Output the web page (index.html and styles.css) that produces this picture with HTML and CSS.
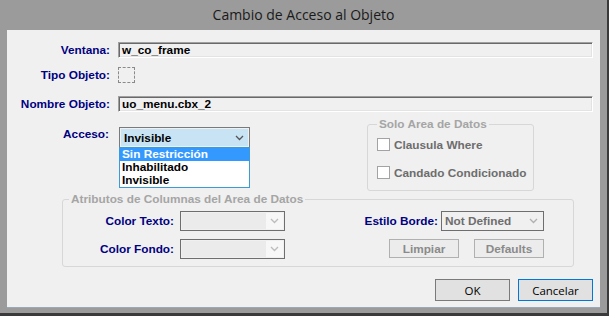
FILE: index.html
```html
<!DOCTYPE html>
<html lang="es">
<head>
  <meta charset="UTF-8">
  <title>Cambio de Acceso al Objeto</title>
  <link rel="stylesheet" href="styles.css">
</head>
<body>
  <div class="window">
    <div class="titlebar">Cambio de Acceso al Objeto</div>

    <div class="client">
      <!-- Object info -->
      <div class="row row-ventana">
        <span class="label">Ventana:</span>
        <div class="field">w_co_frame</div>
      </div>
      <div class="row row-tipo">
        <span class="label">Tipo Objeto:</span>
        <div class="dashed"></div>
      </div>
      <div class="row row-nombre">
        <span class="label">Nombre Objeto:</span>
        <div class="field">uo_menu.cbx_2</div>
      </div>

      <!-- Access + data area -->
      <div class="middle">
        <div class="acceso">
          <span class="label label-acceso">Acceso:</span>
          <div class="combo combo-open">
            <div class="combo-face">
              <span>Invisible</span>
              <svg class="chev" width="9" height="6" viewBox="0 0 9 6"><polyline points="1,1 4.5,4.5 8,1" fill="none" stroke="#555" stroke-width="1.3"/></svg>
            </div>
            <ul class="dropdown">
              <li class="selected">Sin Restricción</li>
              <li>Inhabilitado</li>
              <li>Invisible</li>
            </ul>
          </div>
        </div>

        <fieldset class="group group-solo">
          <legend>Solo Area de Datos</legend>
          <div class="check"><span class="box"></span>Clausula Where</div>
          <div class="check"><span class="box"></span>Candado Condicionado</div>
        </fieldset>
      </div>

      <!-- Column attributes -->
      <fieldset class="group group-attr">
        <legend>Atributos de Columnas del Area de Datos</legend>
        <div class="attr-left">
          <div class="attr-row">
            <span class="label label-attr">Color Texto:</span>
            <div class="combo combo-disabled">
              <span class="combo-text"></span>
              <span class="combo-btn"><svg width="9" height="6" viewBox="0 0 9 6"><polyline points="1,1 4.5,4.5 8,1" fill="none" stroke="#bcbcbc" stroke-width="1.3"/></svg></span>
            </div>
          </div>
          <div class="attr-row">
            <span class="label label-attr">Color Fondo:</span>
            <div class="combo combo-disabled">
              <span class="combo-text"></span>
              <span class="combo-btn"><svg width="9" height="6" viewBox="0 0 9 6"><polyline points="1,1 4.5,4.5 8,1" fill="none" stroke="#bcbcbc" stroke-width="1.3"/></svg></span>
            </div>
          </div>
        </div>
        <div class="attr-right">
          <div class="attr-row">
            <span class="label">Estilo Borde:</span>
            <div class="combo combo-borde">
              <span class="combo-text">Not Defined</span>
              <span class="combo-btn"><svg width="9" height="6" viewBox="0 0 9 6"><polyline points="1,1 4.5,4.5 8,1" fill="none" stroke="#b0b0b0" stroke-width="1.3"/></svg></span>
            </div>
          </div>
          <div class="attr-row attr-buttons">
            <button class="btn-flat">Limpiar</button>
            <button class="btn-flat">Defaults</button>
          </div>
        </div>
      </fieldset>

      <div class="actions">
        <button class="btn btn-ok">OK</button>
        <button class="btn btn-cancel">Cancelar</button>
      </div>
    </div>
  </div>
</body>
</html>
```

FILE: styles.css
```css
/* General */
body {
  margin: 0;
  width: 609px;
  height: 316px;
  overflow: hidden;
  background: #c8c8c8;
  font-family: "Liberation Sans", Arial, sans-serif;
}

.window {
  box-sizing: border-box;
  width: 609px;
  height: 316px;
  background: #9b9b9b;
  border-right: 2px solid #3a3a3a;
  border-bottom: 3px solid #3a3a3a;
}

.titlebar {
  height: 30px;
  line-height: 30px;
  text-align: center;
  font-family: "Open Sans", sans-serif;
  font-size: 14px;
  color: #1a1a1a;
}

.client {
  box-sizing: border-box;
  margin-left: 7px;
  width: 593px;
  height: 278px;
  background: #f0f0f0;
  border-bottom: 1px solid #9aa9b8;
}

/* Labels and fields */
.label {
  font-size: 11.8px;
  font-weight: bold;
  color: #000080;
  line-height: 13px;
  white-space: nowrap;
}

.row {
  display: flex;
  align-items: center;
  height: 16px;
}

.row .label {
  width: 103px;
  margin-right: 8px;
  text-align: right;
}

.row-ventana { padding-top: 12px; }
.row-tipo { margin-top: 9px; }
.row-nombre { margin-top: 13px; }

.field {
  box-sizing: border-box;
  width: 475px;
  height: 16px;
  padding-left: 3px;
  border-top: 1px solid #a0a0a0;
  border-left: 1px solid #a0a0a0;
  border-right: 1px solid #fff;
  border-bottom: 1px solid #fff;
  box-shadow: inset 1px 1px 0 #696969, inset -1px -1px 0 #e3e3e3;
  font-size: 11.8px;
  font-weight: bold;
  line-height: 14px;
  color: #000;
}

.dashed {
  box-sizing: border-box;
  width: 17px;
  height: 16px;
  border: 1px dashed #8a8a8a;
}

/* Middle section */
.middle {
  display: flex;
  margin-top: 6px;
}

.acceso {
  display: flex;
  align-items: flex-start;
  width: 360px;
  padding-top: 9px;
}

.label-acceso {
  width: 102px;
  margin-right: 10px;
  text-align: right;
  line-height: 15px;
}

.combo {
  position: relative;
  box-sizing: border-box;
  display: flex;
  font-size: 11.8px;
  font-weight: bold;
}

.combo-open {
  width: 131px;
  height: 21px;
  border: 1px solid #7a7a7a;
  padding: 1px;
  background: #f0f0f0;
}

.combo-face {
  flex: 1;
  display: flex;
  align-items: center;
  justify-content: space-between;
  padding: 0 4px 0 3px;
  background: #c7e3f4;
  color: #000;
}

.chev { margin-top: 1px; }

.dropdown {
  position: absolute;
  top: 100%;
  left: -1px;
  width: 131px;
  box-sizing: border-box;
  margin: 0;
  padding: 0;
  list-style: none;
  background: #fff;
  border: 1px solid #3a9bd5;
  z-index: 2;
}

.dropdown li {
  height: 13px;
  line-height: 13px;
  padding-left: 2px;
  color: #000;
}

.dropdown li.selected {
  background: #3399ff;
  color: #fff;
}

/* Group boxes */
.group {
  box-sizing: border-box;
  margin: 0;
  border: 1px solid #d7d7d7;
  border-radius: 3px;
  min-width: 0;
}

.group legend {
  padding: 0 2px;
  margin-left: 6px;
  font-size: 11.8px;
  font-weight: bold;
  line-height: 13px;
  color: #a5a5a5;
}

.group-solo {
  width: 167px;
  height: 73px;
  padding: 7px 0 0 9px;
}

.group-solo legend { margin-left: 0; }

.check {
  display: flex;
  align-items: center;
  height: 13px;
  font-size: 11.8px;
  font-weight: bold;
  color: #6d6d6d;
}

.check + .check { margin-top: 15px; }

.box {
  box-sizing: border-box;
  width: 13px;
  height: 13px;
  margin-right: 4px;
  border: 1px solid #a3a3a3;
  background: #fff;
}

.group-attr {
  display: flex;
  width: 512px;
  height: 74px;
  margin: 2px 0 0 55px;
  padding: 5px 0 0 0;
}

.attr-left { width: 222px; }

.attr-right {
  display: flex;
  flex-direction: column;
  align-items: flex-end;
  width: 176px;
  margin-left: 83px;
}

.attr-row {
  display: flex;
  align-items: center;
  height: 20px;
}

.attr-row + .attr-row { margin-top: 8px; }

.label-attr {
  width: 111px;
  margin-right: 6px;
  text-align: right;
}

.attr-right .label { margin-right: 3px; }

.combo-disabled,
.combo-borde {
  height: 20px;
  border: 1px solid #6e6e6e;
  padding: 1px;
  background: #f0f0f0;
  align-items: stretch;
}

.combo-disabled { width: 105px; }
.combo-borde { width: 103px; }

.combo-text {
  flex: 1;
  padding-left: 2px;
  line-height: 16px;
  color: #6d6d6d;
}

.combo-disabled .combo-text { background: #ebebeb; }

.combo-btn {
  display: flex;
  align-items: center;
  justify-content: center;
  width: 17px;
  background: #f7f7f7;
}

.combo-borde .combo-btn { background: #f0f0f0; }

.attr-buttons {
  height: 19px;
  margin-top: 8px;
}

.btn-flat {
  box-sizing: border-box;
  width: 70px;
  height: 19px;
  margin: 0 0 0 15px;
  padding: 0;
  border: 1px solid #b0b0b0;
  background: #ececec;
  font-family: "Liberation Sans", Arial, sans-serif;
  font-size: 11.8px;
  font-weight: bold;
  color: #8a8a8a;
}

/* Dialog buttons */
.actions {
  display: flex;
  justify-content: flex-end;
  gap: 8px;
  margin-top: 12px;
  padding-right: 7px;
}

.btn {
  box-sizing: border-box;
  width: 75px;
  height: 22px;
  padding: 0;
  background: #e1e1e1;
  border: 1px solid #7a7a7a;
  font-family: "Open Sans", sans-serif;
  font-size: 11.5px;
  color: #000;
}

.btn-cancel {
  border-color: #0078d7;
}
```
